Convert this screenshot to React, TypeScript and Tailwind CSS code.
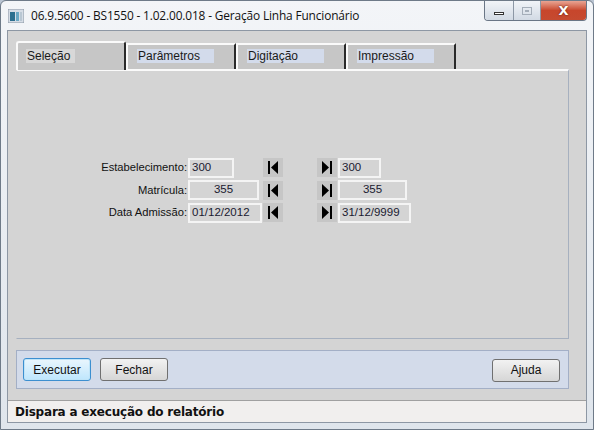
import React from "react";

const ui = "font-['Liberation_Sans',Arial,sans-serif]";

const tabs = ["Seleção", "Parâmetros", "Digitação", "Impressão"];

const rows = [
  { label: "Estabelecimento:", from: "300", to: "300", w1: "w-[46px]", w2: "w-[43px]", center: false },
  { label: "Matrícula:", from: "355", to: "355", w1: "w-[71px]", w2: "w-[69px]", center: true },
  { label: "Data Admissão:", from: "01/12/2012", to: "31/12/9999", w1: "w-[74px]", w2: "w-[73px]", center: false },
];

const FirstIcon = () => (
  <svg width="12" height="13" viewBox="0 0 12 13">
    <rect x="1" y="0" width="2" height="13" fill="#000" />
    <polygon points="11,0 4,6.5 11,13" fill="#000" />
  </svg>
);

const LastIcon = () => (
  <svg width="12" height="13" viewBox="0 0 12 13">
    <polygon points="1,0 8,6.5 1,13" fill="#000" />
    <rect x="9" y="0" width="2" height="13" fill="#000" />
  </svg>
);

const Field = ({ value, width, center }: { value: string; width: string; center: boolean }) => (
  <div
    className={`${width} h-[20px] border-2 border-[#f4f4f4] bg-[#d4d4d4] flex items-center px-[2px] text-[11.5px] text-[#1a1a30] ${
      center ? "justify-center" : ""
    }`}
  >
    {value}
  </div>
);

const NavBtn = ({ last }: { last?: boolean }) => (
  <div className="w-[20px] h-[19px] bg-[#c6c6c6] flex items-center justify-center">
    {last ? <LastIcon /> : <FirstIcon />}
  </div>
);

const Button = ({ children, focused }: { children: React.ReactNode; focused?: boolean }) => (
  <button
    className={`w-[68px] h-[23px] rounded-[3px] border text-[12px] text-[#111] ${
      focused
        ? "border-[#3c8fd0] bg-gradient-to-b from-[#eaf6fd] to-[#bee6fd] shadow-[inset_0_0_0_1px_#bfe4f8]"
        : "border-[#707070] bg-gradient-to-b from-[#f2f2f2] to-[#d6d6d6]"
    }`}
  >
    {children}
  </button>
);

export default function App() {
  return (
    <div className={`${ui} w-[594px] h-[430px] bg-[#b9c4d2] flex flex-col`}>
      <div className="w-[594px] h-[430px] rounded-t-[6px] border border-[#6e7a88] bg-gradient-to-b from-[#f3f5f8] to-[#dfe5ec] flex flex-col">
        {/* title bar */}
        <div className="h-[29px] flex items-start">
          <div className="flex items-center h-[29px] pl-[7px] gap-[7px]">
            <svg width="16" height="14" viewBox="0 0 16 14">
              <rect x="0" y="0" width="16" height="14" fill="#d6dde6" stroke="#8d98a6" />
              <rect x="2" y="3" width="5" height="9" fill="#2d6f8f" />
              <rect x="8" y="3" width="3" height="9" fill="#6aa8c4" />
              <rect x="12" y="3" width="2" height="9" fill="#b9c7d3" />
            </svg>
            <span className="font-['Open_Sans','Noto_Sans',sans-serif] text-[11.9px] text-[#111] tracking-[-0.15px]">
              06.9.5600 - BS1550 - 1.02.00.018 - Geração Linha Funcionário
            </span>
          </div>
          <div className="ml-auto mr-[6px] flex h-[20px] rounded-b-[4px] overflow-hidden border border-t-0 border-[#6a7686]">
            <div className="w-[29px] bg-gradient-to-b from-[#f1f4f8] to-[#d2dae4] border-r border-[#8c97a5] flex items-center justify-center">
              <div className="w-[10px] h-[3px] bg-white border border-[#333] mt-[5px]" />
            </div>
            <div className="w-[27px] bg-gradient-to-b from-[#f1f4f8] to-[#d2dae4] border-r border-[#8c97a5] flex items-center justify-center">
              <div className="w-[10px] h-[8px] border border-[#a5aeb9] flex items-center justify-center">
                <div className="w-[4px] h-[2px] border border-[#a5aeb9]" />
              </div>
            </div>
            <div className="w-[45px] bg-gradient-to-b from-[#e8a493] via-[#c7462c] to-[#c54a30] flex items-center justify-center">
              <span className="font-['DejaVu_Sans',sans-serif] font-bold text-[13px] text-white leading-none [text-shadow:0_0_2px_#4a1208]">
                X
              </span>
            </div>
          </div>
        </div>

        {/* client */}
        <div className="mx-[6px] h-[393px] border border-[#8d97a4] bg-[#d4d4d4] flex flex-col">
          <div className="flex-1 pl-[8px] pt-[10px]">
            {/* tabs */}
            <div className="flex items-end h-[28px]">
              {tabs.map((t, i) =>
                i === 0 ? (
                  <div
                    key={t}
                    className="relative z-10 w-[110px] h-[29px] -mb-[1px] bg-[#c6c6c6] border-t-2 border-l-2 border-r-2 border-t-[#fafafa] border-l-[#fafafa] border-r-[#2a2a2a] rounded-tl-[3px] rounded-tr-[3px] pl-[8px] pt-[6px] flex items-start"
                  >
                    <span className="block w-[49px] h-[14px] bg-[#d8d8d8] text-[12px] leading-[14px] text-[#1a1a1a] pl-[1px]">
                      {t}
                    </span>
                  </div>
                ) : (
                  <div
                    key={t}
                    className="w-[110px] h-[26px] bg-[#c6c6c6] border-t-2 border-l-2 border-r-2 border-t-[#fafafa] border-l-[#fafafa] border-r-[#2a2a2a] pl-[9px] pt-[4px] flex items-start"
                  >
                    <span className="block w-[77px] h-[14px] bg-[#d3dbeb] text-[12px] leading-[14px] text-[#1a1a1a] pl-[1px]">
                      {t}
                    </span>
                  </div>
                )
              )}
            </div>

            {/* tab panel */}
            <div className="w-[553px] h-[270px] border-t-2 border-t-[#fafafa] border-l border-l-[#d4d4d4] border-r border-r-[#a6b0bf] border-b border-b-[#a6b0bf] pt-[86px]">
              <div className="flex flex-col gap-[1.5px]">
                {rows.map((r) => (
                  <div key={r.label} className="flex items-center h-[21px]">
                    <div className="w-[171px] text-right text-[11.2px] text-[#111] pr-[1px]">{r.label}</div>
                    <div className="w-[75px]">
                      <Field value={r.from} width={r.w1} center={r.center} />
                    </div>
                    <NavBtn />
                    <div className="w-[34px]" />
                    <NavBtn last />
                    <div className="ml-[1px]">
                      <Field value={r.to} width={r.w2} center={r.center} />
                    </div>
                  </div>
                ))}
              </div>
            </div>

            {/* button panel */}
            <div className="mt-[11px] w-[553px] h-[39px] border border-[#a3afc6] bg-[#d3dbea] flex items-center pl-[6px] pr-[8px] gap-[9px]">
              <Button focused>Executar</Button>
              <Button>Fechar</Button>
              <div className="ml-auto">
                <Button>Ajuda</Button>
              </div>
            </div>
          </div>

          {/* status bar */}
          <div className="h-[22px] border-t border-[#a0a0a0] bg-[#f1efee] flex items-center pl-[7px]">
            <span className="font-['DejaVu_Sans',sans-serif] font-bold text-[12px] text-[#111] tracking-[-0.2px]">
              Dispara a execução do relatório
            </span>
          </div>
        </div>
      </div>
    </div>
  );
}
